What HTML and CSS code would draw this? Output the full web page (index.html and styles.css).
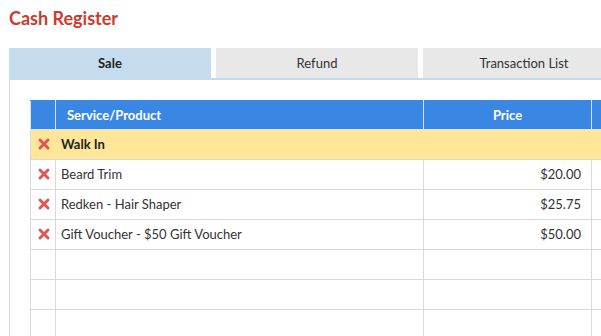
FILE: index.html
```html
<!DOCTYPE html>
<html lang="en">
  <head>
    <meta charset="UTF-8" />
    <meta name="viewport" content="width=device-width, initial-scale=1.0" />
    <title>Cash Register</title>
    <link rel="stylesheet" href="styles.css">
  </head>
  <body>
    <div class="page">
      <h1 class="title">Cash Register</h1>

      <div class="tabs">
        <div class="tab active">Sale</div>
        <div class="tab">Refund</div>
        <div class="tab">Transaction List</div>
      </div>

      <div class="panel">
        <table class="items">
          <thead>
            <tr>
              <th class="col-x"></th>
              <th class="col-name">Service/Product</th>
              <th class="col-price">Price</th>
              <th class="col-extra"></th>
            </tr>
          </thead>
          <tbody>
            <tr class="group">
              <td class="col-x"><svg class="remove" viewBox="0 0 14 14"><path d="M3 3 L11 11 M11 3 L3 11" /></svg></td>
              <td class="col-name">Walk In</td>
              <td></td>
              <td></td>
            </tr>
            <tr>
              <td class="col-x"><svg class="remove" viewBox="0 0 14 14"><path d="M3 3 L11 11 M11 3 L3 11" /></svg></td>
              <td class="col-name">Beard Trim</td>
              <td class="col-price">$20.00</td>
              <td></td>
            </tr>
            <tr>
              <td class="col-x"><svg class="remove" viewBox="0 0 14 14"><path d="M3 3 L11 11 M11 3 L3 11" /></svg></td>
              <td class="col-name">Redken - Hair Shaper</td>
              <td class="col-price">$25.75</td>
              <td></td>
            </tr>
            <tr>
              <td class="col-x"><svg class="remove" viewBox="0 0 14 14"><path d="M3 3 L11 11 M11 3 L3 11" /></svg></td>
              <td class="col-name">Gift Voucher - $50 Gift Voucher</td>
              <td class="col-price">$50.00</td>
              <td></td>
            </tr>
            <tr><td></td><td></td><td></td><td></td></tr>
            <tr><td></td><td></td><td></td><td></td></tr>
            <tr><td></td><td></td><td></td><td></td></tr>
          </tbody>
        </table>
      </div>
    </div>
  </body>
</html>
```

FILE: styles.css
```css
body {
  margin: 0;
  font-family: Lato, "Open Sans", sans-serif;
  color: #333;
  background-color: #fff;
  overflow: hidden;
}
.page {
  width: 780px;
  padding: 7px 0 0 9px;
}
.title {
  margin: 0;
  font-size: 18px;
  line-height: 22px;
  font-weight: 700;
  color: #cc3b2e;
}
.tabs {
  display: flex;
  gap: 5px;
  margin-top: 19px;
  border-bottom: 2px solid #c5dcef;
}
.tab {
  width: 202px;
  height: 29px;
  padding-top: 1px;
  line-height: 29px;
  text-align: center;
  font-size: 13px;
  background-color: #e8e8e8;
  color: #333;
}
.tab.active {
  background-color: #c5dcef;
  font-weight: 700;
  color: #222;
}
.panel {
  border-left: 1px solid #d9d9d9;
  padding: 20px 0 0 20px;
  height: 300px;
}
.items {
  border-collapse: collapse;
  font-size: 13px;
  table-layout: fixed;
  width: 700px;
}
.items th,
.items td {
  height: 28px;
  padding: 0 6px 1px 6px;
  border: 1px solid #d9d9d9;
  white-space: nowrap;
}
.items th {
  height: 28px;
  padding-bottom: 0;
  background-color: #3a86e3;
  color: #fff;
  font-weight: 700;
  border-color: #d6e4f5;
  border-top-color: #3a86e3;
}
.items th.col-name {
  text-align: left;
  text-indent: 5px;
}
.items th.col-price {
  text-align: center;
}
.col-x {
  width: 12px;
  text-align: center;
}
.col-name {
  width: 355px;
}
.items td.col-name {
  padding-left: 5px;
}
.col-price {
  width: 155px;
  text-align: right;
}
.items td.col-price {
  padding-right: 10px;
}
.group td {
  background-color: #ffe699;
  font-weight: 700;
  color: #222;
  border-left-color: #ffe699;
  border-right-color: #ffe699;
}
.group td:first-child {
  border-left-color: #d9d9d9;
}
.remove {
  width: 14px;
  height: 14px;
  display: block;
  margin: 0 auto;
}
.remove path {
  stroke: #e25555;
  stroke-width: 3;
  stroke-linecap: round;
  fill: none;
}
```
